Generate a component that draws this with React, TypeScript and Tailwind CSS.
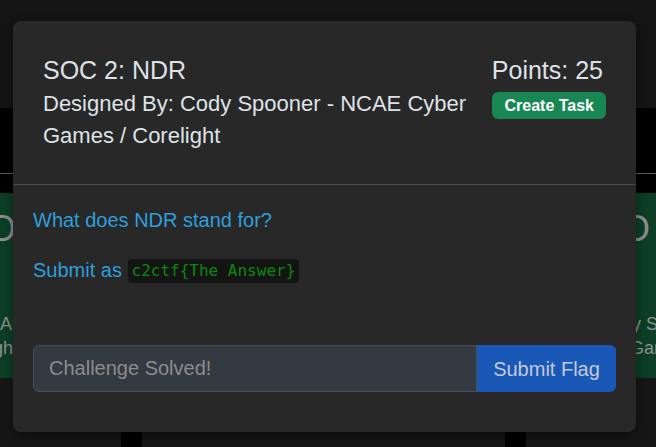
import React from "react";

export default function App() {
  return (
    <div className="relative w-[656px] h-[447px] overflow-hidden bg-[#161616] font-['Liberation_Sans',Arial,sans-serif] flex flex-col">
      {/* dimmed page behind the modal */}
      <div className="h-[108px] shrink-0 bg-[#141414]" />
      <div className="h-[85px] shrink-0 bg-black flex flex-col">
        <div className="mt-[65px] h-px bg-[#5c5c5c]" />
      </div>
      <div className="h-[185px] shrink-0 flex justify-between">
        <div className="w-[13px] bg-[#0c3f26] overflow-hidden flex flex-col items-end text-[#8e8e8e] whitespace-nowrap pt-[18px]">
          <div className="text-[36px] leading-[36px] mr-[-3px]">O</div>
          <div className="text-[18px] leading-[24px] mt-[65px] mr-[1px]">A</div>
          <div className="text-[18px] leading-[24px] mr-[0px]">gh</div>
        </div>
        <div className="w-[20px] bg-[#0c3f26] overflow-hidden flex flex-col items-start text-[#8e8e8e] whitespace-nowrap pt-[18px]">
          <div className="text-[36px] leading-[36px] ml-[-14px]">O</div>
          <div className="text-[18px] leading-[24px] mt-[65px] ml-[-4px]">y S</div>
          <div className="text-[18px] leading-[24px] ml-[-6px]">Gar</div>
        </div>
      </div>
      <div className="flex-1 flex">
        <div className="ml-[121px] w-[21px] bg-black" />
        <div className="ml-[363px] w-[21px] bg-black" />
      </div>

      {/* modal */}
      <div className="absolute left-[13px] top-[21px] w-[623px] h-[411px] bg-[#282828] rounded-[8px] shadow-[0_4px_12px_rgba(0,0,0,0.4)] flex flex-col">
        <div className="h-[164px] shrink-0 border-b border-[#4a4e54] px-[30px] pt-[35px] flex justify-between">
          <div className="w-[436px]">
            <div className="text-[25px] leading-[29px] text-[#dee2e6]">SOC 2: NDR</div>
            <div className="mt-[3px] text-[22px] leading-[32px] text-[#dee2e6]">
              Designed By: Cody Spooner - NCAE Cyber Games / Corelight
            </div>
          </div>
          <div className="flex flex-col items-end">
            <div className="text-[25px] leading-[29px] text-[#dee2e6] mr-[3px]">Points: 25</div>
            <div className="mt-[7px] h-[27px] px-[12px] flex items-center bg-[#198754] rounded-[6px] text-white font-bold text-[16px] leading-[19px]">
              Create Task
            </div>
          </div>
        </div>
        <div className="px-[20px] pt-[20px] flex flex-col">
          <p className="text-[20px] leading-[30px] text-[#2f9fdc]">What does NDR stand for?</p>
          <p className="mt-[20px] text-[20px] leading-[30px] text-[#2f9fdc]">
            Submit as{" "}
            <code className="inline-block align-[1px] bg-[#141414] rounded-[4px] px-[4px] py-[2px] text-[16px] leading-[20px] text-[#0a8a0a] font-['DejaVu_Sans_Mono',monospace]">
              c2ctf{"{"}The Answer{"}"}
            </code>
          </p>
          <div className="mt-[60px] h-[47px] flex">
            <input
              readOnly
              placeholder="Challenge Solved!"
              className="flex-1 min-w-0 h-full bg-[#343a42] border border-[#4b5058] rounded-l-[6px] px-[15px] text-[20px] text-[#dee2e6] placeholder:text-[#8c8c8c] outline-none font-['Liberation_Sans',Arial,sans-serif]"
            />
            <button className="w-[139px] h-full bg-[#1a58b8] rounded-r-[6px] text-[20px] text-[#c3cad6] font-['Liberation_Sans',Arial,sans-serif]">
              Submit Flag
            </button>
          </div>
        </div>
      </div>
    </div>
  );
}
